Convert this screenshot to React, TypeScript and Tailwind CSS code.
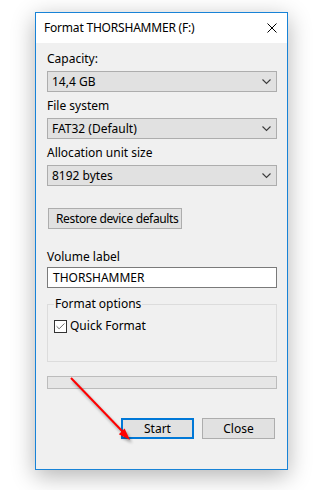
import { Check } from "lucide-react"

const font = { fontFamily: '"Noto Sans", "Open Sans", sans-serif' }

const Chevron = () => (
  <svg width="9" height="6" viewBox="0 0 9 6" className="shrink-0">
    <path d="M0.5 0.5 L4.5 4.5 L8.5 0.5" fill="none" stroke="#3c3c3c" strokeWidth="1.1" />
  </svg>
)

const Select = ({ value }: { value: string }) => (
  <div className="mt-[4px] flex h-[21px] items-center justify-between border border-[#adadad] bg-[#e1e1e1] pl-[4px] pr-[5px] leading-[16px]">
    <span>{value}</span>
    <Chevron />
  </div>
)

const Label = ({ children, className }: { children: React.ReactNode; className?: string }) => (
  <div className={"h-[16px] leading-[16px] " + (className ?? "")}>{children}</div>
)

export default function App() {
  return (
    <div className="relative h-[490px] w-[326px] bg-white text-[12px] text-black" style={font}>
      <div className="ml-[35px] mt-[12px] w-[253px] border border-[#1883d7] bg-[#f0f0f0] shadow-[0_6px_22px_rgba(0,0,0,0.3)]">
        <div className="flex h-[30px] items-center justify-between bg-white pl-[8px] pr-[10px]">
          <span className="tracking-[-0.2px]">Format THORSHAMMER (F:)</span>
          <svg width="10" height="10" viewBox="0 0 10 10">
            <path d="M0.5 0.5 L9.5 9.5 M9.5 0.5 L0.5 9.5" stroke="#000" strokeWidth="1" />
          </svg>
        </div>

        <div className="flex flex-col pb-[30px] pl-[11px] pr-[10px] pt-[8px]">
          <Label>Capacity:</Label>
          <Select value="14,4 GB" />

          <Label className="mt-[6px]">File system</Label>
          <Select value="FAT32 (Default)" />

          <Label className="mt-[6px]">Allocation unit size</Label>
          <Select value="8192 bytes" />

          <div className="ml-[1px] mt-[22px] flex h-[21px] w-[134px] items-center whitespace-nowrap border border-[#adadad] bg-[#e1e1e1] pl-[7px] leading-[16px] tracking-[-0.35px]">
            Restore device defaults
          </div>

          <Label className="mt-[20px]">Volume label</Label>
          <div className="mt-[2px] flex h-[21px] items-center border border-[#7a7a7a] bg-white pl-[5px] leading-[16px]">
            THORSHAMMER
          </div>

          <fieldset className="mt-[8px] border border-[#dcdcdc] pb-[27px] pl-[6px]">
            <legend className="px-[1px] leading-[16px]">Format options</legend>
            <div className="mt-[6px] flex h-[16px] items-center gap-[3px] leading-[16px]">
              <span className="flex h-[13px] w-[13px] items-center justify-center border border-[#333] bg-white">
                <Check size={11} strokeWidth={1.6} color="#333" />
              </span>
              <span>Quick Format</span>
            </div>
          </fieldset>

          <div className="mt-[14px] h-[13px] border border-[#bcbcbc] bg-[#e6e6e6]" />

          <div className="mt-[29px] flex justify-end gap-[8px] pr-[2px]">
            <div className="flex h-[21px] w-[73px] items-center justify-center border-2 border-[#0078d7] bg-[#e1e1e1] leading-[16px]">
              Start
            </div>
            <div className="flex h-[21px] w-[73px] items-center justify-center border border-[#adadad] bg-[#e1e1e1] leading-[16px]">
              Close
            </div>
          </div>
        </div>
      </div>

      <svg className="pointer-events-none absolute left-0 top-0" width="326" height="490">
        <defs>
          <filter id="sh" x="-50%" y="-50%" width="200%" height="200%">
            <feGaussianBlur stdDeviation="1.5" />
          </filter>
        </defs>
        <g opacity="0.35" filter="url(#sh)" transform="translate(2 3)">
          <line x1="71" y1="366" x2="123" y2="420" stroke="#000" strokeWidth="2" />
          <polygon points="130,428 118.8,422.2 124.6,416.6" fill="#000" />
        </g>
        <line x1="71" y1="366" x2="123" y2="420" stroke="#ff0000" strokeWidth="2" />
        <polygon points="130,428 118.8,422.2 124.6,416.6" fill="#ff0000" />
      </svg>
    </div>
  )
}
